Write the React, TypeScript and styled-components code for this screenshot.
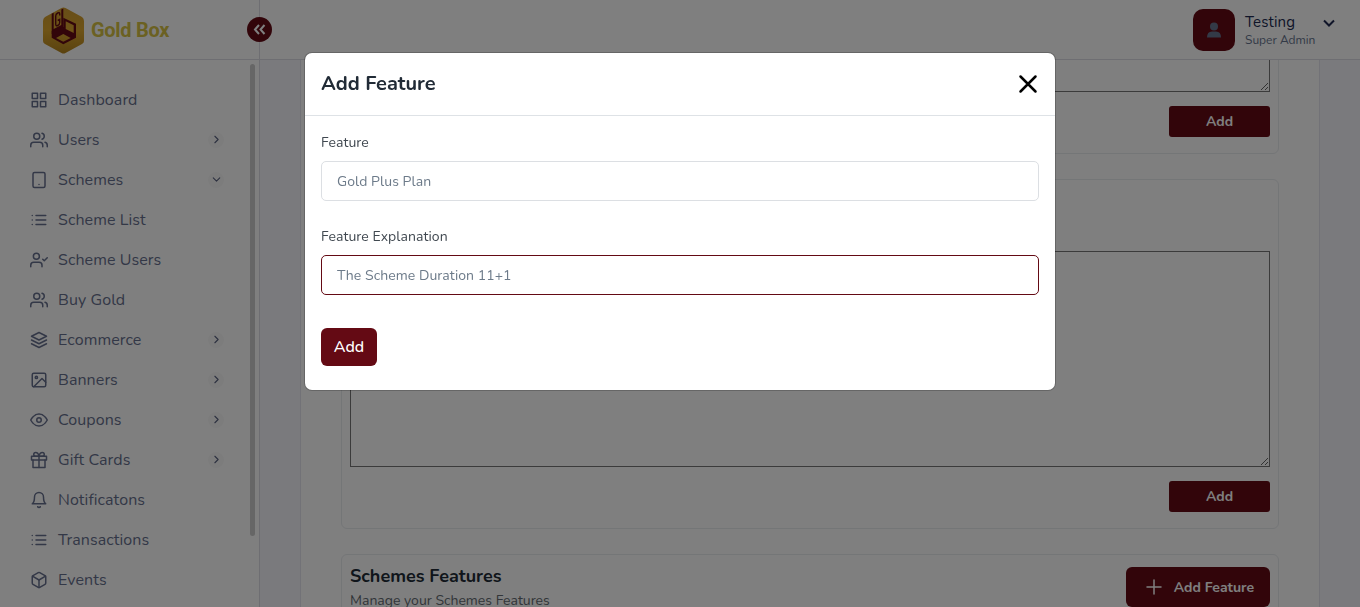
import React from 'react';
import styled, { createGlobalStyle } from 'styled-components';
import {
  FiGrid, FiUsers, FiTablet, FiList, FiUserCheck, FiLayers, FiImage, FiEye,
  FiGift, FiBell, FiBox, FiChevronRight, FiChevronDown, FiPlus,
} from 'react-icons/fi';
import type { IconType } from 'react-icons';

const maroon = '#640a14';
const line = '#e9ecef';

const GlobalStyle = createGlobalStyle`
  * { box-sizing: border-box; }
  body {
    margin: 0;
    background: #f5f5fa;
    font-family: Nunito, Lato, sans-serif;
    color: #212b36;
    overflow: hidden;
  }
  button, input, textarea { font-family: inherit; }
`;

const Page = styled.div`
  display: flex;
  flex-direction: column;
  height: 607px;
  overflow: hidden;
`;

const Header = styled.header`
  display: flex;
  flex: none;
  height: 60px;
  background: #fff;
  border-bottom: 1px solid #dcdce4;
`;

const Brand = styled.div`
  position: relative;
  display: flex;
  align-items: center;
  width: 260px;
  padding: 1px 0 0 43px;
  border-right: 1px solid #dcdce4;
`;

const BrandName = styled.span`
  margin-left: 7px;
  font: 700 20px/24px Roboto, sans-serif;
  color: #d6c244;
  letter-spacing: -0.3px;
`;

const Toggle = styled.div`
  position: absolute;
  right: -13px;
  top: 17px;
  display: grid;
  place-items: center;
  width: 25px;
  height: 25px;
  border-radius: 50%;
  background: ${maroon};
`;

const Profile = styled.div`
  display: flex;
  align-items: flex-start;
  margin-left: auto;
  padding: 9px 24px 0 0;
`;

const Avatar = styled.div`
  display: grid;
  place-items: center;
  width: 42px;
  height: 42px;
  margin-right: 10px;
  border-radius: 10px;
  background: ${maroon};
`;

const ProfileText = styled.div`
  width: 77px;
  padding-top: 3px;
`;

const ProfileName = styled.div`
  font-size: 15px;
  line-height: 20px;
  color: #212b52;
  letter-spacing: 0.15px;
`;

const ProfileRole = styled.div`
  font-size: 12px;
  line-height: 16px;
  color: #67748e;
`;

const Body = styled.div`
  display: flex;
  flex: 1;
  min-height: 0;
`;

const Sidebar = styled.nav`
  position: relative;
  width: 260px;
  padding: 20px 35px 0 30px;
  background: #fff;
  border-right: 1px solid #dcdce4;
`;

const ScrollThumb = styled.div`
  position: absolute;
  top: 4px;
  right: 4px;
  width: 5px;
  height: 472px;
  border-radius: 3px;
  background: #cdcdcd;
`;

const NavItem = styled.div`
  display: flex;
  align-items: center;
  height: 40px;
  color: #67708e;
`;

const NavLabel = styled.span`
  flex: 1;
  margin-left: 10px;
  font-size: 16px;
  line-height: 24px;
  letter-spacing: 0.08px;
`;

const NavArrow = styled.span`
  display: grid;
  place-items: center;
  width: 16px;
  height: 16px;
  padding-bottom: 1px;
  border-radius: 50%;
  background: #f9f9f9;
  color: #5a6280;
`;

const Main = styled.main`
  flex: 1;
  padding: 0 40px;
  overflow: hidden;
`;

const Panel = styled.section`
  margin-top: -297px;
  padding: 40px;
  background: #fff;
  border: 1px solid #e5e5ee;
`;

const Card = styled.section`
  height: 350px;
  margin-bottom: 25px;
  padding: 71px 8px 0;
  border: 1px solid ${line};
  border-radius: 6px;
`;

const FeatureCard = styled(Card)`
  display: flex;
  justify-content: space-between;
  align-items: flex-start;
  padding-top: 12px;
`;

const Editor = styled.textarea`
  display: block;
  width: 100%;
  height: 216px;
  border: 1px solid #767676;
  background: #fff;
`;

const SmallButton = styled.button`
  display: block;
  width: 101px;
  height: 31px;
  margin: 14px 0 0 auto;
  border: 0;
  border-radius: 3px;
  background: ${maroon};
  color: #fff;
  font-size: 14px;
  font-weight: 700;
`;

const CardTitle = styled.h2`
  margin: -2px 0 0;
  font-size: 18px;
  line-height: 22px;
  font-weight: 700;
`;

const CardNote = styled.p`
  margin: 4px 0 0;
  font-size: 14px;
  line-height: 20px;
  color: #646b72;
`;

const FeatureButton = styled.button`
  display: flex;
  align-items: center;
  justify-content: space-between;
  width: 144px;
  height: 40px;
  padding: 0 16px;
  border: 0;
  border-radius: 6px;
  background: ${maroon};
  color: #fff;
  font-size: 14px;
  font-weight: 700;
  white-space: nowrap;
`;

const Backdrop = styled.div`
  position: fixed;
  inset: 0;
  display: flex;
  justify-content: center;
  align-items: flex-start;
  padding-top: 53px;
  background: rgba(0, 0, 0, 0.5);
`;

const Modal = styled.div`
  width: 750px;
  height: 337px;
  border-radius: 7px;
  background: #fff;
  box-shadow: 0 0 0 1px rgba(0, 0, 0, 0.2);
`;

const ModalHead = styled.div`
  display: flex;
  justify-content: space-between;
  align-items: center;
  height: 63px;
  padding: 0 16px;
  border-bottom: 1px solid #dee2e6;
`;

const ModalTitle = styled.h1`
  margin: 0;
  font-size: 20px;
  line-height: 30px;
  font-weight: 700;
`;

const ModalForm = styled.div`
  padding: 16px;
`;

const Label = styled.label`
  display: block;
  margin-bottom: 8px;
  font-size: 14px;
  line-height: 21px;
  color: #404850;
  letter-spacing: 0.06px;
`;

const Field = styled.input<{ $active?: boolean }>`
  display: block;
  width: 100%;
  height: 40px;
  margin-bottom: 25px;
  padding: 0 15px;
  border: 1px solid ${(p) => (p.$active ? maroon : '#dcdfe3')};
  border-radius: 5px;
  outline: 0;
  font-size: 14px;
  letter-spacing: 0.06px;
  &::placeholder { color: #6c7a89; opacity: 1; }
`;

const Submit = styled.button`
  width: 56px;
  height: 38px;
  margin-top: 8px;
  padding: 0;
  border: 0;
  border-radius: 6px;
  background: ${maroon};
  color: #fff;
  font-size: 16px;
  font-weight: 500;
`;

type Entry = { label: string; icon: IconType; arrow?: 'right' | 'down' };

const entries: Entry[] = [
  { label: 'Dashboard', icon: FiGrid },
  { label: 'Users', icon: FiUsers, arrow: 'right' },
  { label: 'Schemes', icon: FiTablet, arrow: 'down' },
  { label: 'Scheme List', icon: FiList },
  { label: 'Scheme Users', icon: FiUserCheck },
  { label: 'Buy Gold', icon: FiUsers },
  { label: 'Ecommerce', icon: FiLayers, arrow: 'right' },
  { label: 'Banners', icon: FiImage, arrow: 'right' },
  { label: 'Coupons', icon: FiEye, arrow: 'right' },
  { label: 'Gift Cards', icon: FiGift, arrow: 'right' },
  { label: 'Notificatons', icon: FiBell },
  { label: 'Transactions', icon: FiList },
  { label: 'Events', icon: FiBox },
];

const Logo = () => (
  <svg width="41" height="47" viewBox="0 0 41 47">
    <defs>
      <linearGradient id="gold" x1="0" y1="0" x2="0" y2="1">
        <stop offset="0" stopColor="#d09c30" />
        <stop offset="0.5" stopColor="#dca62e" />
        <stop offset="1" stopColor="#b4841e" />
      </linearGradient>
    </defs>
    <path d="M18.500 1Q20.500 0 22.500 1L39 10Q41 11.500 41 14V34Q41 36 39 37L22.500 46Q20.500 47 18.500 46L2 37Q0 36 0 34V14Q0 11.500 2 10Z" fill="url(#gold)" />
    <g fill={maroon}>
      <path d="M8.700 6.800L10.700 5.800V22L18.300 18V2.600L20.300 1.600V22L11 27H8.700Z" />
      <path
        fillRule="evenodd"
        d="M20.300 10.700L33 16.700V30.700L20.300 37.300L8.700 30.700V24L20.300 20ZM22.700 14.300V22L30.700 26V18.200ZM20.300 27L13 31L20.300 34.700L27.700 31Z"
      />
    </g>
    <path
      d="M16.700 8.500V7Q16.700 5 14.700 6Q12.700 7 12.700 9V17Q12.700 19.500 14.700 18.500Q16.700 17.500 16.700 15.500V12.500L14.700 13.500"
      fill="none"
      stroke={maroon}
      strokeWidth="1.400"
    />
  </svg>
);

export default function App() {
  return (
    <>
      <GlobalStyle />
      <Page>
        <Header>
          <Brand>
            <Logo />
            <BrandName>Gold Box</BrandName>
            <Toggle>
              <svg width="13" height="11" viewBox="0 0 13 11" fill="none" stroke="#fff" strokeWidth="2">
                <path d="M6 1L2 5.500L6 10M11.500 1L7.500 5.500L11.500 10" />
              </svg>
            </Toggle>
          </Brand>
          <Profile>
            <Avatar>
              <svg width="14" height="16" viewBox="0 0 14 16" fill="#67748e">
                <circle cx="7" cy="4.500" r="4" />
                <path d="M0 15.500Q0 9.500 5 9.500H9Q14 9.500 14 15.500Z" />
              </svg>
            </Avatar>
            <ProfileText>
              <ProfileName>Testing</ProfileName>
              <ProfileRole>Super Admin</ProfileRole>
            </ProfileText>
            <svg width="14" height="28" viewBox="0 0 14 28" fill="none" stroke="#212b52" strokeWidth="2">
              <path d="M2 11.500L7 16.500L12 11.500" />
            </svg>
          </Profile>
        </Header>
        <Body>
          <Sidebar>
            {entries.map(({ label, icon: Icon, arrow }) => (
              <NavItem key={label}>
                <Icon size={18} />
                <NavLabel>{label}</NavLabel>
                {arrow && (
                  <NavArrow>
                    {arrow === 'right' ? <FiChevronRight size={13} /> : <FiChevronDown size={13} />}
                  </NavArrow>
                )}
              </NavItem>
            ))}
            <ScrollThumb />
          </Sidebar>
          <Main>
            <Panel>
              <Card>
                <Editor />
                <SmallButton>Add</SmallButton>
              </Card>
              <Card>
                <Editor />
                <SmallButton>Add</SmallButton>
              </Card>
              <FeatureCard>
                <div>
                  <CardTitle>Schemes Features</CardTitle>
                  <CardNote>Manage your Schemes Features</CardNote>
                </div>
                <FeatureButton>
                  <FiPlus size={24} strokeWidth={1.5} />
                  Add Feature
                </FeatureButton>
              </FeatureCard>
            </Panel>
          </Main>
        </Body>
      </Page>
      <Backdrop>
        <Modal>
          <ModalHead>
            <ModalTitle>Add Feature</ModalTitle>
            <svg width="22" height="22" viewBox="0 0 22 22" fill="none" stroke="#000" strokeWidth="2.500" strokeLinecap="round">
              <path d="M3.500 3.500L18.500 18.500M18.500 3.500L3.500 18.500" />
            </svg>
          </ModalHead>
          <ModalForm>
            <Label>Feature</Label>
            <Field placeholder="Gold Plus Plan" />
            <Label>Feature Explanation</Label>
            <Field $active placeholder="The Scheme Duration 11+1" />
            <Submit>Add</Submit>
          </ModalForm>
        </Modal>
      </Backdrop>
    </>
  );
}
